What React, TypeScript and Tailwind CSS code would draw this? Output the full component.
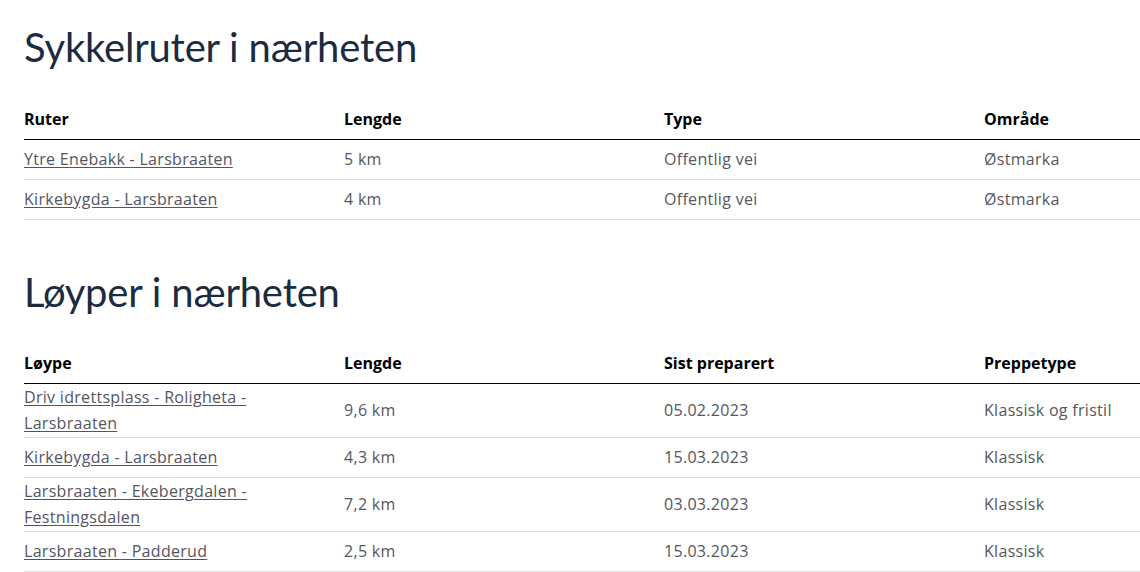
import React from "react"

type Row = { cells: string[] }

const sykkelruter: Row[] = [
  { cells: ["Ytre Enebakk - Larsbraaten", "5 km", "Offentlig vei", "Østmarka"] },
  { cells: ["Kirkebygda - Larsbraaten", "4 km", "Offentlig vei", "Østmarka"] },
]

const loyper: Row[] = [
  { cells: ["Driv idrettsplass - Roligheta - Larsbraaten", "9,6 km", "05.02.2023", "Klassisk og fristil"] },
  { cells: ["Kirkebygda - Larsbraaten", "4,3 km", "15.03.2023", "Klassisk"] },
  { cells: ["Larsbraaten - Ekebergdalen - Festningsdalen", "7,2 km", "03.03.2023", "Klassisk"] },
  { cells: ["Larsbraaten - Padderud", "2,5 km", "15.03.2023", "Klassisk"] },
]

const DataTable = ({ headers, rows }: { headers: string[]; rows: Row[] }) => (
  <table className="w-[1280px] table-fixed border-collapse text-left font-['Open_Sans',sans-serif]">
    <thead>
      <tr className="h-10 border-b border-black">
        {headers.map((h) => (
          <th key={h} className="w-[320px] p-0 align-middle text-base font-bold text-black">
            {h}
          </th>
        ))}
      </tr>
    </thead>
    <tbody>
      {rows.map((row, idx) => (
        <tr key={idx} className="h-10 border-b border-[#e0e0e0]">
          {row.cells.map((c, i) => (
            <td
              key={i}
              className="pb-px pt-0 pl-0 pr-[60px] align-middle text-base leading-[26px] tracking-[0.3px] text-[#57565c]"
            >
              {i === 0 ? (
                <a href="#" className="underline underline-offset-2 text-[#55555f]">
                  {c}
                </a>
              ) : (
                c
              )}
            </td>
          ))}
        </tr>
      ))}
    </tbody>
  </table>
)

export default function App() {
  return (
    <div className="h-[572px] w-[1140px] overflow-hidden bg-white pl-6 pt-[23px] font-['Lato',sans-serif]">
      <h2 className="text-[40px] font-normal leading-[48px] tracking-[-0.2px] text-[#1b2b40]">
        Sykkelruter i nærheten
      </h2>
      <div className="mt-7">
        <DataTable headers={["Ruter", "Lengde", "Type", "Område"]} rows={sykkelruter} />
      </div>
      <h2 className="mt-[48px] text-[40px] font-normal leading-[48px] tracking-[-0.2px] text-[#1b2b40]">
        Løyper i nærheten
      </h2>
      <div className="mt-7">
        <DataTable headers={["Løype", "Lengde", "Sist preparert", "Preppetype"]} rows={loyper} />
      </div>
    </div>
  )
}
